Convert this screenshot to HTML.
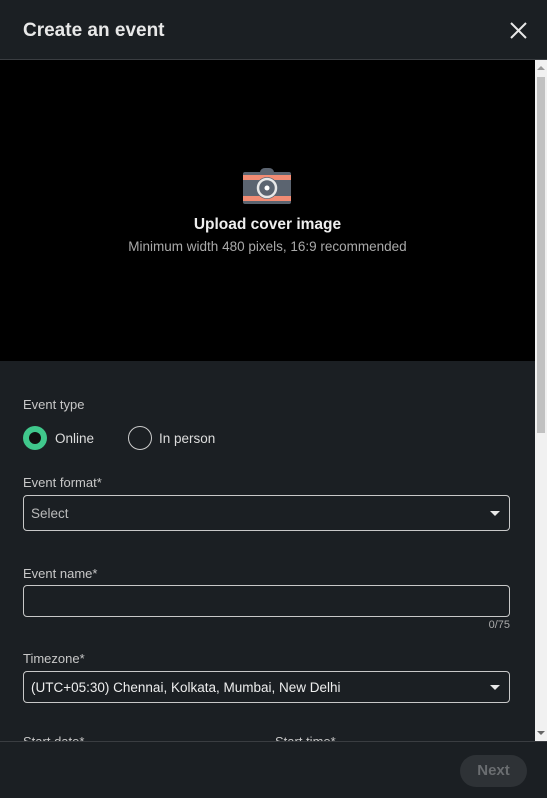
<!DOCTYPE html>
<html><head><style>
*{box-sizing:border-box;margin:0;padding:0}
body{width:547px;height:798px;background:#1b1f23;font-family:"Liberation Sans",sans-serif;color:#e0e0e0;position:relative;overflow:hidden}
.hdr{position:absolute;left:0;top:0;width:547px;height:60px;border-bottom:1px solid #3a3d41}
.hdr h1{position:absolute;left:23px;top:20px;font-size:19px;font-weight:bold;color:#e8e8e8}
.cover{position:absolute;left:0;top:60px;width:535px;height:301px;background:#000}
.sb{position:absolute;left:535px;top:60px;width:12px;height:681px;background:#f1f1f1}
.thumb{position:absolute;left:537px;top:77px;width:8px;height:356px;background:#c1c1c1}
.lbl{position:absolute;left:23px;font-size:13px;color:#c8c8c8}
.box{position:absolute;left:23px;width:487px;border:1px solid #c8c8c8;border-radius:4px}
.box span{position:absolute;left:7px;font-size:13.5px}
.arr{position:absolute;right:9px;width:0;height:0;border-left:5px solid transparent;border-right:5px solid transparent;border-top:5px solid #e8e8e8}
.ftr{position:absolute;left:0;top:741px;width:547px;height:57px;border-top:1px solid #3a3d41;background:#1b1f23}
</style></head><body>
<div class="hdr"><h1>Create an event</h1>
<svg style="position:absolute;left:510px;top:22px" width="17" height="17" viewBox="0 0 17 17"><path d="M1 1L16 16M16 1L1 16" stroke="#e8e8e8" stroke-width="2"/></svg></div>
<div class="cover">
<svg style="position:absolute;left:242px;top:107px" width="50" height="38" viewBox="0 0 50 38">
<path d="M18 5Q19 1 23 1h4q4 0 5 4z" fill="#5b6470"/>
<rect x="1" y="5" width="48" height="32" rx="2" fill="#5b6470"/>
<rect x="1" y="8" width="48" height="5" fill="#f28c74"/>
<rect x="1" y="29" width="48" height="5" fill="#f28c74"/>
<circle cx="25" cy="21" r="11" fill="#5b6470"/>
<circle cx="25" cy="21" r="9" fill="none" stroke="#e8e8e8" stroke-width="2.5"/>
<circle cx="25" cy="21" r="2.5" fill="#fff"/>
</svg>
<div style="position:absolute;left:0;width:535px;top:156px;text-align:center;font-size:15.5px;font-weight:bold;color:#eee">Upload cover image</div>
<div style="position:absolute;left:0;width:535px;top:179px;text-align:center;font-size:13.5px;color:#aaa">Minimum width 480 pixels, 16:9 recommended</div>
</div>
<div class="sb"></div><div class="thumb"></div>
<div style="position:absolute;left:537px;top:66px;border-left:4px solid transparent;border-right:4px solid transparent;border-bottom:4px solid #999"></div>
<div style="position:absolute;left:537px;top:731px;border-left:4px solid transparent;border-right:4px solid transparent;border-top:4px solid #666"></div>
<div class="lbl" style="top:397px">Event type</div>
<div style="position:absolute;left:23px;top:426px;width:24px;height:24px;border-radius:50%;background:#40c88c"><div style="position:absolute;left:6px;top:6px;width:12px;height:12px;border-radius:50%;background:#111"></div></div>
<div style="position:absolute;left:55px;top:431px;font-size:13.5px;color:#ddd">Online</div>
<div style="position:absolute;left:128px;top:426px;width:24px;height:24px;border-radius:50%;border:1px solid #ccc"></div>
<div style="position:absolute;left:159px;top:431px;font-size:13.5px;color:#ddd">In person</div>
<div class="lbl" style="top:475px">Event format*</div>
<div class="box" style="top:495px;height:36px"><span style="top:10px;color:#bbb">Select</span><div class="arr" style="top:15px"></div></div>
<div class="lbl" style="top:566px">Event name*</div>
<div class="box" style="top:585px;height:32px"></div>
<div style="position:absolute;right:37px;top:619px;font-size:11px;color:#aaa">0/75</div>
<div class="lbl" style="top:651px">Timezone*</div>
<div class="box" style="top:671px;height:32px"><span style="top:8px;color:#eee">(UTC+05:30) Chennai, Kolkata, Mumbai, New Delhi</span><div class="arr" style="top:13px"></div></div>
<div class="lbl" style="top:734px">Start date*</div>
<div class="lbl" style="top:734px;left:275px">Start time*</div>
<div class="ftr"><div style="position:absolute;left:460px;top:13px;width:67px;height:32px;border-radius:16px;background:#2e3236;color:#6a6d70;font-weight:bold;font-size:15px;text-align:center;line-height:32px">Next</div></div>
</body></html>
